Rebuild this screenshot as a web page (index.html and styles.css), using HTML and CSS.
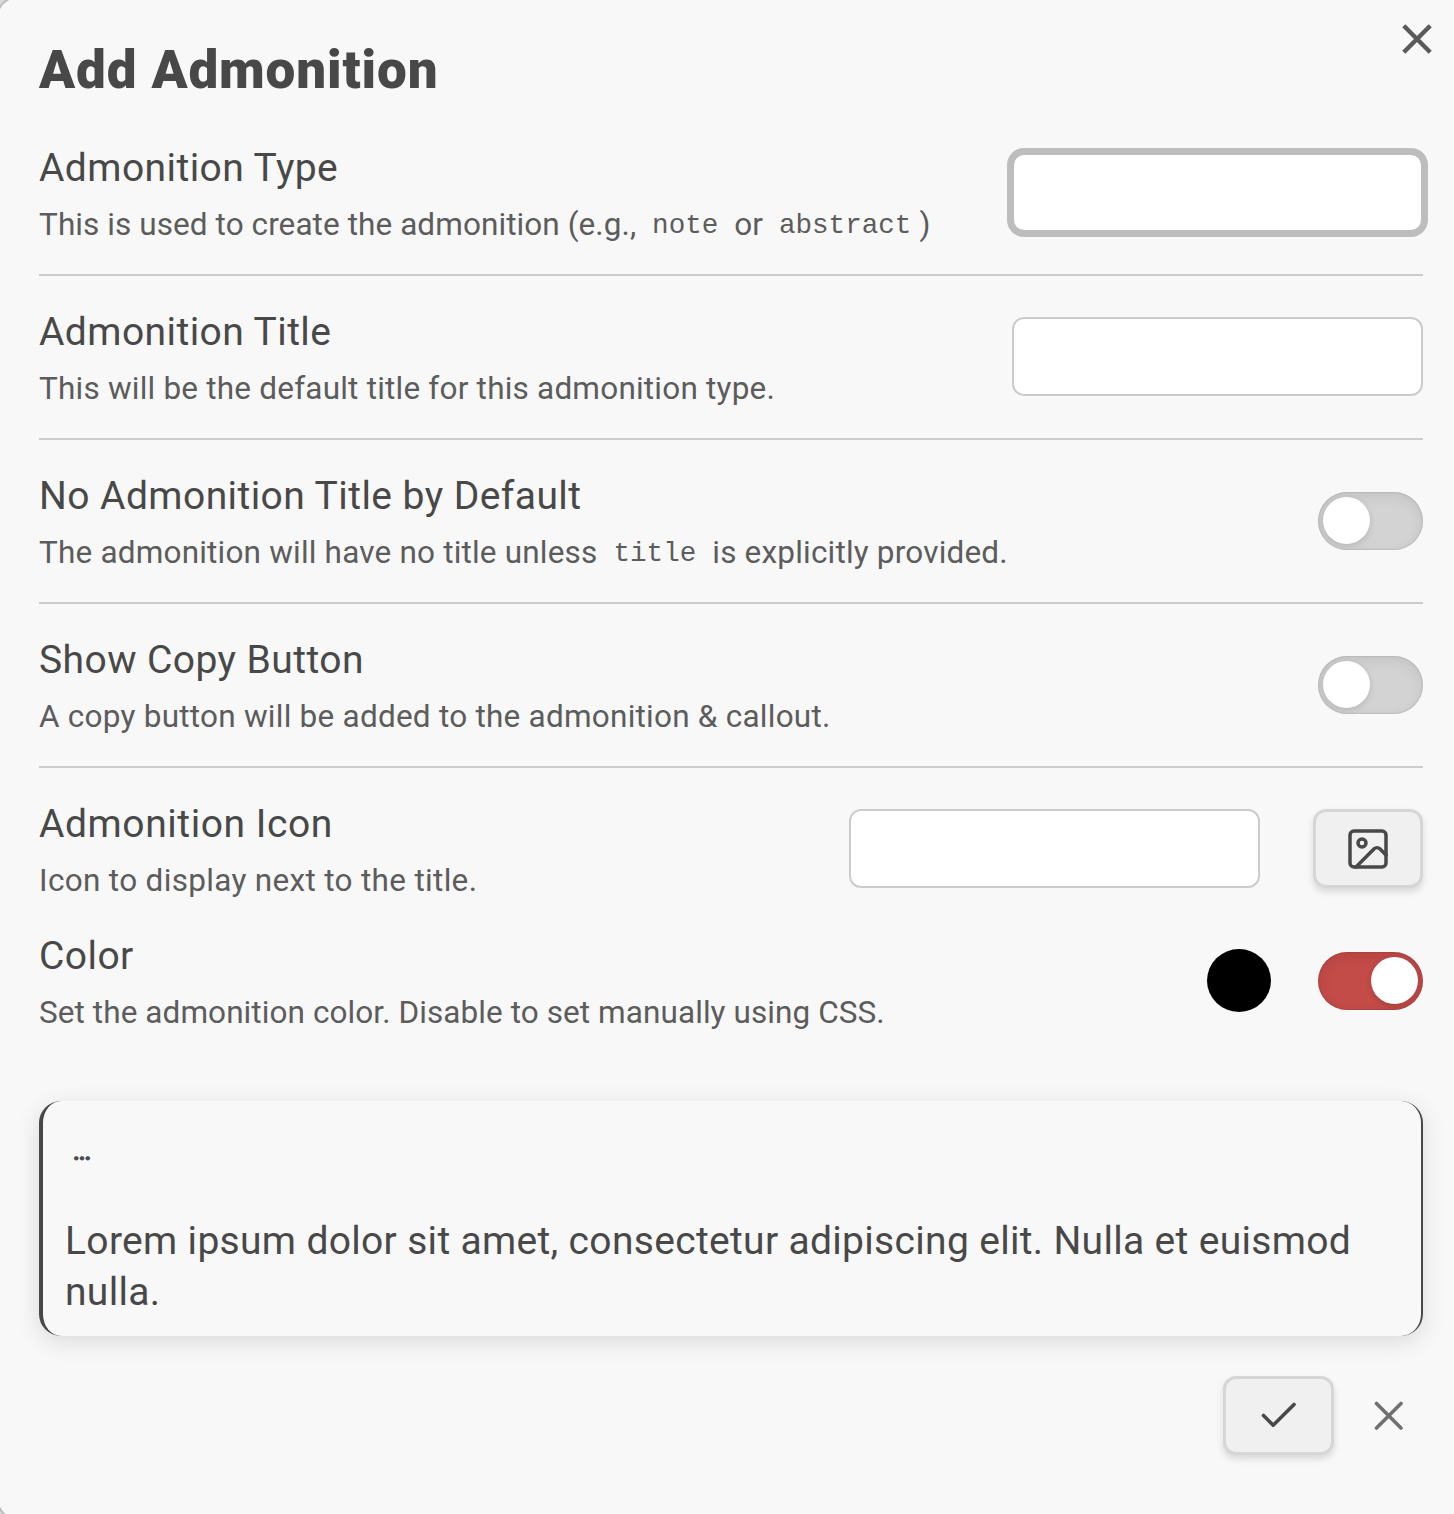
FILE: index.html
```
<!DOCTYPE html>
<html lang="en">
<head>
<meta charset="utf-8">
<title>Add Admonition</title>
<link rel="stylesheet" href="styles.css">
</head>
<body>
<main class="modal">
  <button class="modal-close" aria-label="Close"><svg width="30" height="30" viewBox="0 0 30 30"><path d="M1.8 1.8 28.2 28.2M28.2 1.8 1.8 28.2"/></svg></button>
  <h1 class="modal-title">Add Admonition</h1>

  <section class="setting first">
    <div class="info">
      <div class="name">Admonition Type</div>
      <div class="desc d-type">This is used to create the admonition (e.g., <code>note</code> or <code>abstract</code>)</div>
    </div>
    <input class="field focused" type="text" aria-label="Admonition Type">
  </section>
  <section class="setting">
    <div class="info">
      <div class="name">Admonition Title</div>
      <div class="desc d-title">This will be the default title for this admonition type.</div>
    </div>
    <input class="field" type="text" aria-label="Admonition Title">
  </section>
  <section class="setting">
    <div class="info">
      <div class="name">No Admonition Title by Default</div>
      <div class="desc d-default">The admonition will have no title unless <code>title</code> is explicitly provided.</div>
    </div>
    <div class="toggle"></div>
  </section>
  <section class="setting">
    <div class="info">
      <div class="name">Show Copy Button</div>
      <div class="desc d-copy">A copy button will be added to the admonition &amp; callout.</div>
    </div>
    <div class="toggle"></div>
  </section>
  <section class="setting">
    <div class="info">
      <div class="name n-icon">Admonition Icon</div>
      <div class="desc d-icon">Icon to display next to the title.</div>
    </div>
    <div class="controls wide">
      <input class="field" type="text" aria-label="Admonition Icon">
      <button class="btn" aria-label="Choose image"><svg class="image-icon" width="48" height="48" viewBox="0 0 24 24"><rect x="3" y="3" width="18" height="18" rx="2"/><circle cx="9" cy="9" r="2"/><path d="m21 15-3.086-3.086a2 2 0 0 0-2.828 0L6 21"/></svg></button>
    </div>
  </section>
  <section class="setting color-row">
    <div class="info">
      <div class="name">Color</div>
      <div class="desc d-color">Set the admonition color. Disable to set manually using CSS.</div>
    </div>
    <div class="controls">
      <div class="swatch"></div>
      <div class="toggle on"></div>
    </div>
  </section>

  <section class="preview">
    <div class="preview-title">...</div>
    <p class="preview-text">Lorem ipsum dolor sit amet, consectetur adipiscing elit. Nulla et euismod nulla.</p>
  </section>

  <footer class="actions">
    <button class="btn save" aria-label="Save"><svg width="40" height="40" viewBox="0 0 40 40"><path d="M4.5 19.5 14.2 29.2 35 8.5"/></svg></button>
    <button class="cancel" aria-label="Cancel"><svg width="30" height="30" viewBox="0 0 30 30"><path d="M2.5 2.5 27 27M27 2.5 2.5 27"/></svg></button>
  </footer>
</main>
</body>
</html>
```
FILE: styles.css
```
* { box-sizing: border-box; }
html, body { margin: 0; height: 1514px; overflow: hidden; }
body {
  background: #d9d9d9;
  color: #484848;
  font-family: Roboto, "Liberation Sans", sans-serif;
}
svg { display: block; fill: none; stroke: currentColor; stroke-linecap: round; stroke-linejoin: round; }
button { padding: 0; border: 0; background: none; color: inherit; }

.modal {
  position: relative;
  width: 1476px;
  height: 1524px;
  margin: -4px 0 0 -4px;
  padding: 41px 47px 0 41px;
  background: #f8f8f8;
  border: 2px solid #bdbdbd;
  border-radius: 22px;
}
.modal-close { position: absolute; top: 26px; left: 1404px; color: #5a5a5a; stroke-width: 4.4; }
.modal-close svg { stroke-linecap: butt; overflow: visible; }
.modal-title {
  height: 73px;
  margin: 0;
  font-size: 53px;
  line-height: 62px;
  font-weight: 900;
  letter-spacing: 0.87px;
}

.setting {
  display: flex;
  align-items: center;
  justify-content: space-between;
  height: 164px;
  border-top: 2px solid #cccccc;
}
.setting.first { height: 162px; border-top: 0; }
.setting.color-row { height: 102px; border-top: 0; }
.info { display: flex; flex-direction: column; gap: 10px; padding-top: 2px; white-space: nowrap; }
.name { font-size: 39px; line-height: 52px; letter-spacing: 0.43px; }
.n-icon { letter-spacing: 0.57px; }
.desc { font-size: 31.5px; line-height: 42px; color: #5c5c5c; }
.d-type { letter-spacing: 0.08px; }
.d-title { letter-spacing: 0.21px; }
.d-default { letter-spacing: 0.19px; }
.d-copy { letter-spacing: 0.24px; }
.d-icon { letter-spacing: 0.32px; }
.d-color { letter-spacing: 0.08px; }
code { margin: 0 8px; font: 27.6px "Liberation Mono", monospace; line-height: 1; letter-spacing: 0; vertical-align: 2px; }

.field {
  width: 411px;
  height: 79px;
  margin-bottom: 1px;
  padding: 0 16px;
  border: 2px solid #cccccc;
  border-radius: 12px;
  background: #fff;
  outline: 0;
}
.field.focused { margin-bottom: 2px; border-color: #bdbdbd; box-shadow: 0 0 0 5px #bdbdbd; }
.controls { display: flex; align-items: center; gap: 47px; }
.controls.wide { gap: 53px; }

.btn {
  display: grid;
  place-items: center;
  width: 110px;
  height: 79px;
  border: 3px solid #d6d6d6;
  border-radius: 13px;
  background: #f0f0f0;
  box-shadow: 0 4px 7px rgba(0, 0, 0, 0.13);
  stroke-width: 3.6;
}
.btn.save { width: 111px; }
.controls .btn { margin-bottom: 1px; }
.image-icon { stroke-width: 1.75; }

.toggle {
  display: flex;
  align-items: flex-start;
  width: 105px;
  height: 58px;
  padding: 5px;
  border-radius: 29px;
  background: #d3d3d3;
  box-shadow: inset 0 4px 14px rgba(0, 0, 0, 0.08), inset 0 0 2px rgba(0, 0, 0, 0.25);
}
.toggle::before {
  content: "";
  width: 47px;
  height: 47px;
  border-radius: 50%;
  background: #fff;
  box-shadow: 0 2px 6px rgba(0, 0, 0, 0.14);
}
.toggle.on { justify-content: flex-end; background: #c34b48; }
.swatch { width: 64px; height: 63px; margin-bottom: 1px; border-radius: 50%; background: #000; }

.preview {
  height: 235px;
  margin-top: 69px;
  padding: 30px 20px 0 22px;
  border: 0 solid #484848;
  border-left-width: 4px;
  border-right-width: 2px;
  border-radius: 22px;
  box-shadow: 0 6px 24px rgba(0, 0, 0, 0.12);
}
.preview-title {
  height: 85px;
  padding-left: 9px;
  font-size: 21px;
  line-height: 44px;
  font-weight: 900;
  font-style: italic;
  letter-spacing: -0.4px;
  -webkit-text-stroke: 0.8px currentColor;
}
.preview-text { margin: 0; font-size: 39px; line-height: 51px; letter-spacing: 0.32px; }

.actions { display: flex; align-items: center; margin-top: 40px; padding-left: 1184px; }
.cancel { margin-left: 40px; color: #707070; stroke-width: 3.6; }
```
